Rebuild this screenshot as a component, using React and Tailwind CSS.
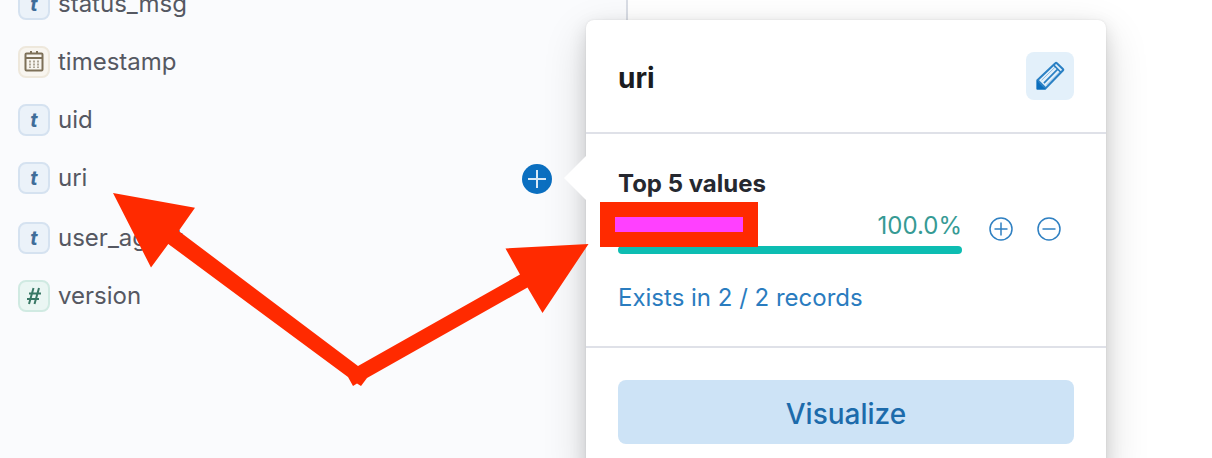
const tokenStyles = {
  text: "border-[#d5e2f0] bg-[#ebf2f9] text-[#3f6d99]",
  date: "border-[#eee8dc] bg-[#f8f5ef] text-[#7d7058]",
  number: "border-[#d0eae2] bg-[#eaf6f3] text-[#387765]",
};

const fields = [
  { name: "status_msg", type: "text" },
  { name: "timestamp", type: "date" },
  { name: "uid", type: "text" },
  { name: "uri", type: "text", selected: true },
  { name: "user_agent", type: "text" },
  { name: "version", type: "number" },
];

function CalendarIcon() {
  return (
    <svg className="shrink-0" width="22" height="24" viewBox="0 0 22 24" fill="none" stroke="currentColor" aria-hidden="true">
      <path d="M3.500 3.500h15q1 0 1 1v15q0 1-1 1h-15q-1 0-1-1v-15q0-1 1-1Z" strokeWidth="2" />
      <path d="M2 8h18M8 1v2.500M14 1v2.500" strokeWidth="2" />
      <path d="M7 10.500v7.500M11 10.500v7.500M15 10.500v7.500" strokeWidth="2" strokeDasharray="2 1" opacity=".6" />
    </svg>
  );
}

function HashIcon() {
  return (
    <svg width="16" height="20" viewBox="0 0 16 20" fill="none" stroke="currentColor" strokeWidth="2" aria-hidden="true">
      <path d="M7.500 2 3 18M13 2 8.500 18M3 7.500h12M1 13h12" />
    </svg>
  );
}

function Token({ type }) {
  return (
    <span className={`flex size-8 shrink-0 items-center justify-center rounded-lg border-2 text-xl leading-6 font-bold italic ${tokenStyles[type]}`}>
      {type === "date" ? <CalendarIcon /> : type === "number" ? <HashIcon /> : "t"}
    </span>
  );
}

function PencilIcon() {
  return (
    <svg width="30" height="30" viewBox="0 0 32 32" fill="none" stroke="#2a80c4" aria-hidden="true">
      <path d="M2.500 29.500v-9L21.700 2.300q.8-.8 1.600 0l6.400 6.300q.8.800 0 1.600L11 29.500Z" strokeWidth="2.200" strokeLinejoin="round" />
      <path d="M9.500 23.500 24.500 8.500M3 20.500 11.500 29M20 4.500l7.500 7.500" strokeWidth="1.800" />
      <path d="M7 20.500 22 6M12 26 27 11" strokeWidth="1" opacity=".5" />
      <path d="M2 20.500 11.500 30H2Z" fill="#0a6ebd" stroke="none" />
    </svg>
  );
}

function CircleIcon({ plus }) {
  return (
    <svg width="24" height="24" viewBox="0 0 24 24" fill="none" stroke="#2f80c2" strokeWidth="1.500" aria-hidden="true">
      <circle cx="12" cy="12" r="11" />
      <path d={plus ? "M5.500 12h13M12 5.500v13" : "M5.500 12h13"} />
    </svg>
  );
}

function FieldPopover() {
  return (
    <section
      aria-label="uri"
      className="absolute top-5 left-[586px] w-[520px] rounded-lg bg-white shadow-[0_0_2px_rgba(0,0,0,0.10),0_16px_44px_rgba(0,0,0,0.16),0_6px_18px_rgba(0,0,0,0.12)]"
    >
      <svg className="absolute top-[134px] -left-[22px]" width="24" height="48" viewBox="0 0 24 48" aria-hidden="true">
        <path d="M24 0 0 24 24 48Z" fill="#fff" />
      </svg>
      <header className="flex items-center justify-between border-b-2 border-[#dfe1e8] p-8">
        <h2 className="pt-1 text-[28px] leading-8 font-bold text-[#1a1c21]">uri</h2>
        <button type="button" aria-label="Edit field" className="flex size-12 items-center justify-center rounded-lg bg-[#e3f0fa]">
          <PencilIcon />
        </button>
      </header>
      <div className="px-8 pt-8 pb-7">
        <h3 className="text-2xl leading-9 font-bold text-[#26282f]">Top 5 values</h3>
        <div className="flex items-center gap-6">
          <div className="w-[344px]">
            <div className="flex justify-end pt-1.5 pb-0.5 text-2xl leading-9 text-[#369a94]">
              <span>100.0%</span>
            </div>
            <div role="meter" aria-label="Share of records" aria-valuemin="0" aria-valuemax="100" aria-valuenow="100" className="h-2 rounded-full bg-[#0dbdb2]" />
          </div>
          <div className="flex gap-6 pt-0.5 pl-[3px]">
            <button type="button" aria-label="Filter for value">
              <CircleIcon plus />
            </button>
            <button type="button" aria-label="Filter out value">
              <CircleIcon />
            </button>
          </div>
        </div>
        <a href="#records" className="block pt-6 text-2xl leading-10 text-[#2a7cbf]">
          Exists in 2 / 2 records
        </a>
      </div>
      <footer className="border-t-2 border-[#dfe1e8] p-8">
        <button type="button" className="h-16 w-full rounded-lg bg-[#cde3f6] pt-1 text-[28px] leading-8 font-medium text-[#1c6bab]">
          Visualize
        </button>
      </footer>
    </section>
  );
}

function Annotations() {
  return (
    <>
      <div className="absolute top-[202px] left-[600px] h-[45px] w-[158px] border-[15px] border-[#ff2a00] bg-[#ff40ff]" />
      <svg className="pointer-events-none absolute top-0 left-0" width="600" height="400" viewBox="0 0 600 400" fill="#ff2a00" aria-hidden="true">
        <path d="M113 193 195 207.700 178.700 231 358 366 520 274.500 505.500 248.500 588.500 244 542.500 313 527.500 287.500 367 378 361 386 357 383.500 353 386 348 377 168.300 244 151 267.500Z" />
      </svg>
    </>
  );
}

export default function App() {
  return (
    <div className="relative flex h-screen overflow-hidden bg-white font-['Inter',sans-serif]">
      <aside className="w-[628px] shrink-0 border-r-2 border-[#d9dde5] bg-[#fafbfd]">
        <ul className="-mt-3 flex flex-col gap-[26px] pr-[74px] pl-[18px] text-2xl leading-8 text-[#555862]">
          {fields.map((field) => (
            <li key={field.name} className="flex items-start gap-2">
              <Token type={field.type} />
              <span className="h-8 grow">{field.name}</span>
              {field.selected && (
                <button type="button" aria-label="Add field as column" className="flex h-[34px] items-center">
                  <svg width="30" height="30" viewBox="0 0 30 30" aria-hidden="true">
                    <circle cx="15" cy="15" r="15" fill="#0b6fc0" />
                    <path d="M6 15h18M15 6v18" stroke="#d9e9f6" strokeWidth="2" />
                  </svg>
                </button>
              )}
            </li>
          ))}
        </ul>
      </aside>
      <main className="grow" />
      <FieldPopover />
      <Annotations />
    </div>
  );
}
